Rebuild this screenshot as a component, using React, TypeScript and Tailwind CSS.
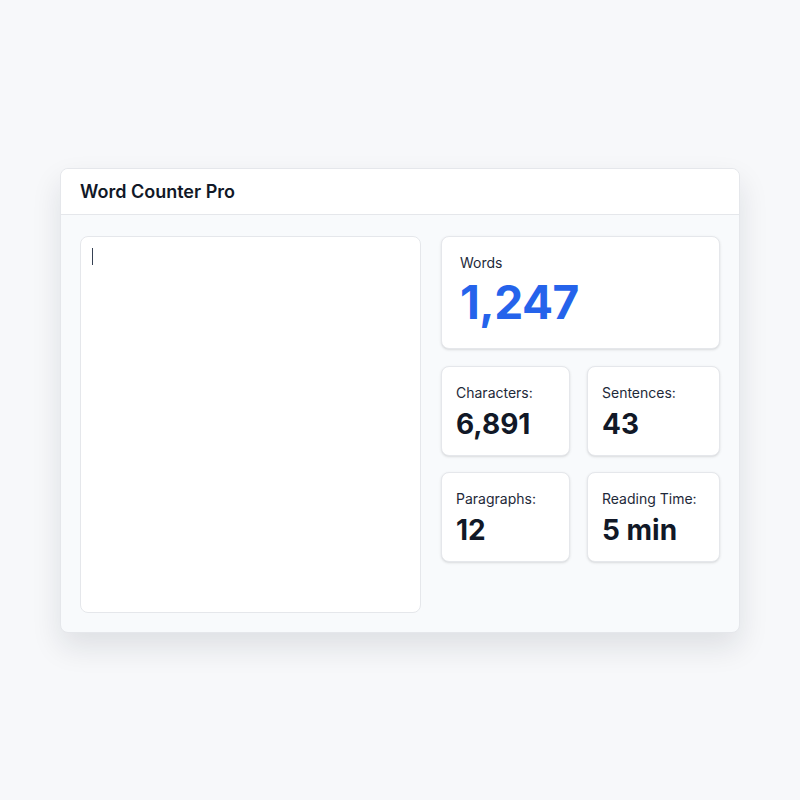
import { useState } from 'react'

interface StatProps {
  label: string
  value: string
}

function StatCard({ label, value }: StatProps) {
  return (
    <div className="bg-white rounded-lg border border-gray-200 shadow-sm h-[90px] px-[14px] pt-[16px]">
      <div className="text-[14px] text-gray-800 leading-5">{label}</div>
      <div className="text-[28px] font-bold text-[#111827] leading-9 mt-[3px]">{value}</div>
    </div>
  )
}

export default function App() {
  const [text, setText] = useState('')

  return (
    <div
      className="min-h-[800px] bg-[#f7f8fa] flex items-start justify-center pt-[168px]"
      style={{ fontFamily: 'Inter, "Noto Sans", sans-serif' }}
    >
      <div className="w-[680px] rounded-lg border border-gray-200 bg-[#f8fafc] shadow-[0_14px_30px_rgba(15,23,42,0.11)] overflow-hidden">
        <div className="h-[46px] bg-white border-b border-gray-200 flex items-center px-[19px]">
          <h1 className="text-[18px] font-semibold text-[#111827]">Word Counter Pro</h1>
        </div>
        <div className="flex gap-5 px-[19px] pt-[21px] pb-[19px]">
          <div className="relative w-[341px] h-[377px]">
            <textarea
              value={text}
              onChange={(e) => setText(e.target.value)}
              className="w-full h-full resize-none rounded-lg border border-gray-200 bg-white px-3 py-[10px] text-[14px] outline-none caret-gray-800"
            />
            {text === '' && (
              <span className="pointer-events-none absolute left-[12px] top-[12px] w-px h-[17px] bg-gray-700" />
            )}
          </div>
          <div className="flex-1 flex flex-col gap-[17px]">
            <div className="bg-white rounded-lg border border-gray-200 shadow-sm h-[113px] px-[18px] pt-[16px]">
              <div className="text-[14px] text-gray-800 leading-5">Words</div>
              <div className="text-[46px] font-bold text-[#2563eb] leading-[52px] -tracking-[0.5px] mt-[3px]">1,247</div>
            </div>
            <div className="grid grid-cols-[129px_1fr] gap-x-[17px] gap-y-[16px]">
              <StatCard label="Characters:" value="6,891" />
              <StatCard label="Sentences:" value="43" />
              <StatCard label="Paragraphs:" value="12" />
              <StatCard label="Reading Time:" value="5 min" />
            </div>
          </div>
        </div>
      </div>
    </div>
  )
}
